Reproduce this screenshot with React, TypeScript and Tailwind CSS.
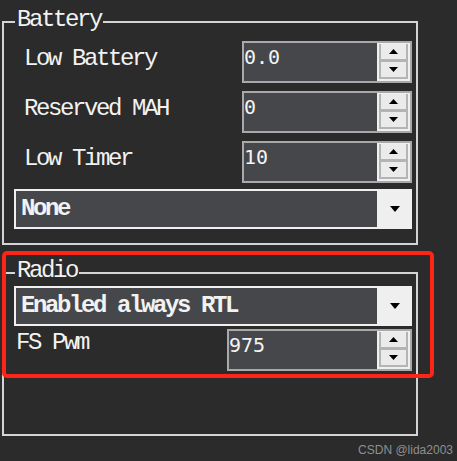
import React from "react";

const LABEL = "font-[Liberation_Mono,monospace] text-[24px] tracking-[-2.4px] text-[#f2f2f2] whitespace-pre";
const DIGITS = "font-[DejaVu_Sans_Mono,monospace] text-[20px] text-[#f4f4f4]";

function Arrow({ dir }: { dir: "up" | "down" }) {
  return (
    <svg width="9" height="5" viewBox="0 0 9 5" className="block">
      <polygon points={dir === "up" ? "4.5,0 9,5 0,5" : "0,0 9,0 4.5,5"} fill="#000" />
    </svg>
  );
}

function SpinBox({ value, wide }: { value: string; wide?: boolean }) {
  return (
    <div className={`flex h-[42px] border-2 border-[#a9a9a9] bg-[#46474a] ${wide ? "w-[185px]" : "w-[170px]"}`}>
      <div className={`flex-1 pt-[2px] leading-[24px] ${DIGITS}`}>{value}</div>
      <div className="flex w-[33px] flex-col bg-[#f0f0f0] px-[2px] pt-[1px] pb-[2px]">
        <div className="flex flex-1 items-center justify-center border-x-2 border-b-[3px] border-[#b4b4b4] bg-[#ebebeb]">
          <Arrow dir="up" />
        </div>
        <div className="flex flex-1 items-center justify-center border-x-2 border-b-2 border-[#b4b4b4] bg-[#ebebeb]">
          <Arrow dir="down" />
        </div>
      </div>
    </div>
  );
}

function Combo({ text }: { text: string }) {
  return (
    <div className="flex h-[40px] w-[398px] border-2 border-[#f0f0f0] bg-[#46474a]">
      <div className={`flex-1 pl-[5px] leading-[36px] font-bold ${LABEL}`}>{text}</div>
      <div className="flex w-[33px] items-center justify-center border-l-2 border-[#f0f0f0] bg-[#efefef]">
        <svg width="10" height="6" viewBox="0 0 10 6" className="block">
          <polygon points="0,0 10,0 5,6" fill="#000" />
        </svg>
      </div>
    </div>
  );
}

function Row({ label, value }: { label: string; value: string }) {
  return (
    <div className="flex items-center justify-between">
      <span className={`pl-[10px] pb-[6px] leading-[24px] ${LABEL}`}>{label}</span>
      <SpinBox value={value} />
    </div>
  );
}

export default function App() {
  return (
    <div className="relative h-[461px] w-[457px] overflow-hidden bg-[#2b2b2b] pt-[8px] pl-[2px]">
      <fieldset className="w-[416px] border-2 border-[#d4d4d4] pl-[10px] pr-[4px] pb-[14px]">
        <legend className={`ml-[1px] px-[2px] pb-[3px] leading-[24px] ${LABEL}`}>Battery</legend>
        <div className="flex flex-col gap-[8px] pt-[6px]">
          <Row label="Low Battery" value="0.0" />
          <Row label="Reserved MAH" value="0" />
          <Row label="Low Timer" value="10" />
        </div>
        <div className="mt-[6px]">
          <Combo text="None" />
        </div>
      </fieldset>

      <fieldset className="mt-[14px] h-[177px] w-[416px] border-2 border-[#d4d4d4] pl-[10px] pr-[4px]">
        <legend className={`ml-[1px] px-[2px] pb-[3px] leading-[24px] ${LABEL}`}>Radio</legend>
        <Combo text="Enabled always RTL" />
        <div className="mt-[3px] flex items-start justify-between">
          <span className={`pl-[2px] pt-[2px] leading-[24px] ${LABEL}`}>FS Pwm</span>
          <SpinBox value="975" wide />
        </div>
      </fieldset>

      <div className="pointer-events-none absolute left-[2px] top-[251px] h-[127px] w-[432px] rounded-[5px] border-4 border-[#ff2418]" />

      <div className="absolute right-[4px] bottom-[4px] font-[Liberation_Sans,sans-serif] text-[12px] leading-[14px] text-[#8f8f8f]">
        CSDN @lida2003
      </div>
    </div>
  );
}
